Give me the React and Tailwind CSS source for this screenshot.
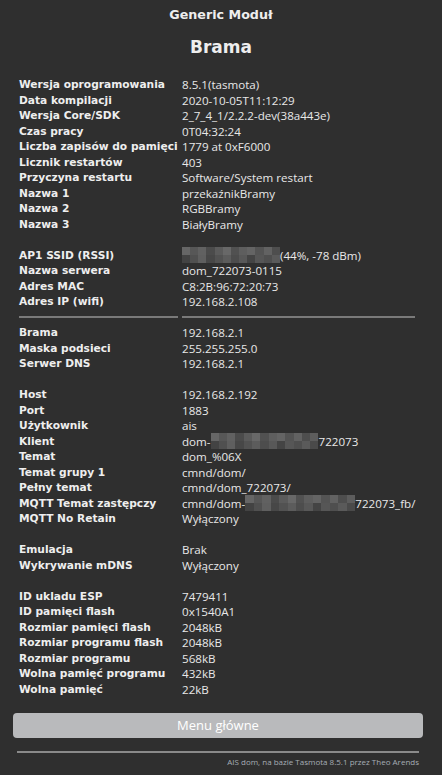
import React from "react";

const SHADES = ["#5a5a5a","#4a4a4a","#555555","#434343","#505050","#5f5f5f","#474747","#525252","#5c5c5c","#4d4d4d","#585858","#444444","#565656","#4f4f4f"];
const SHADES2 = ["#666666","#575757","#616161","#4b4b4b","#5b5b5b","#686868","#515151","#5e5e5e","#646464","#545454","#626262","#4e4e4e","#5d5d5d","#595959"];

function Blur({ w, cols }) {
  const cw = w / cols;
  return (
    <span className="inline-flex flex-col align-middle h-[16px] -mt-[2px]" style={{ width: w }}>
      <span className="flex h-[8px]">
        {Array.from({ length: cols }).map((_, i) => (
          <span key={i} className="h-full" style={{ width: cw, background: SHADES2[i % SHADES2.length] }} />
        ))}
      </span>
      <span className="flex h-[8px]">
        {Array.from({ length: cols }).map((_, i) => (
          <span key={i} className="h-full" style={{ width: cw, background: SHADES[(i + 3) % SHADES.length] }} />
        ))}
      </span>
    </span>
  );
}

const Row = ({ label, children }) => (
  <div className="grid grid-cols-[163px_1fr] h-[15.5px] leading-[15.5px]">
    <div className="px-[2px] font-bold text-[10.65px] text-[#eeeeee] whitespace-nowrap" style={{ fontFamily: '"DejaVu Sans", sans-serif' }}>{label}</div>
    <div className="px-[2px] text-[11.6px] text-[#e8e8e8] whitespace-nowrap" style={{ fontFamily: '"Open Sans", sans-serif' }}>{children}</div>
  </div>
);

const Blank = () => <div className="h-[15.5px]" />;

export default function App() {
  return (
    <div className="min-h-[775px] w-full bg-[#2f2f2f] text-[#eeeeee] font-['DejaVu_Sans',sans-serif]">
      <div className="pt-[7px] text-center font-bold text-[12.7px] leading-[16px]">Generic Moduł</div>
      <div className="mt-[13px] text-center font-bold text-[17px] leading-[22px]">Brama</div>
      <div className="mt-[19px] ml-[17px] w-[400px]">
        <Row label="Wersja oprogramowania">8.5.1(tasmota)</Row>
        <Row label="Data kompilacji">2020-10-05T11:12:29</Row>
        <Row label="Wersja Core/SDK">2_7_4_1/2.2.2-dev(38a443e)</Row>
        <Row label="Czas pracy">0T04:32:24</Row>
        <Row label="Liczba zapisów do pamięci">1779 at 0xF6000</Row>
        <Row label="Licznik restartów">403</Row>
        <Row label="Przyczyna restartu">Software/System restart</Row>
        <Row label="Nazwa 1">przekaźnikBramy</Row>
        <Row label="Nazwa 2">RGBBramy</Row>
        <Row label="Nazwa 3">BiałyBramy</Row>
        <Blank />
        <Row label="AP1 SSID (RSSI)"><Blur w={98} cols={12} />(44%, -78 dBm)</Row>
        <Row label="Nazwa serwera">dom_722073-0115</Row>
        <Row label="Adres MAC">C8:2B:96:72:20:73</Row>
        <Row label="Adres IP (wifi)">192.168.2.108</Row>
        <div className="grid grid-cols-[163px_1fr] h-[15.5px] items-center">
          <div className="px-[2px]"><div className="h-[2px] bg-[#7a7a7a]" /></div>
          <div className="px-[2px]"><div className="h-[2px] bg-[#7a7a7a]" /></div>
        </div>
        <Row label="Brama">192.168.2.1</Row>
        <Row label="Maska podsieci">255.255.255.0</Row>
        <Row label="Serwer DNS">192.168.2.1</Row>
        <Blank />
        <Row label="Host">192.168.2.192</Row>
        <Row label="Port">1883</Row>
        <Row label="Użytkownik">ais</Row>
        <Row label="Klient">dom-<Blur w={108} cols={13} />722073</Row>
        <Row label="Temat">dom_%06X</Row>
        <Row label="Temat grupy 1">cmnd/dom/</Row>
        <Row label="Pełny temat">cmnd/dom_722073/</Row>
        <Row label="MQTT Temat zastępczy">cmnd/dom-<Blur w={110} cols={13} />722073_fb/</Row>
        <Row label="MQTT No Retain">Wyłączony</Row>
        <Blank />
        <Row label="Emulacja">Brak</Row>
        <Row label="Wykrywanie mDNS">Wyłączony</Row>
        <Blank />
        <Row label="ID ukladu ESP">7479411</Row>
        <Row label="ID pamięci flash">0x1540A1</Row>
        <Row label="Rozmiar pamięci flash">2048kB</Row>
        <Row label="Rozmiar programu flash">2048kB</Row>
        <Row label="Rozmiar programu">568kB</Row>
        <Row label="Wolna pamięć programu">432kB</Row>
        <Row label="Wolna pamięć">22kB</Row>
      </div>
      <button
        className="mt-[16px] ml-[13px] w-[410px] h-[25px] rounded-[4px] bg-[#b9babc] text-white text-[13px] leading-[25px] text-center block"
        style={{ fontFamily: '"Open Sans", sans-serif' }}
      >
        Menu główne
      </button>
      <div className="mt-[13px] ml-[17px] w-[402px] h-[2px] bg-[#8a8a8a]" />
      <div className="mt-[4px] mr-[23px] text-right text-[8px] leading-[10px] text-[#a6adb5]" style={{ fontFamily: '"Open Sans", sans-serif' }}>
        AIS dom, na bazie Tasmota 8.5.1 przez Theo Arends
      </div>
    </div>
  );
}
